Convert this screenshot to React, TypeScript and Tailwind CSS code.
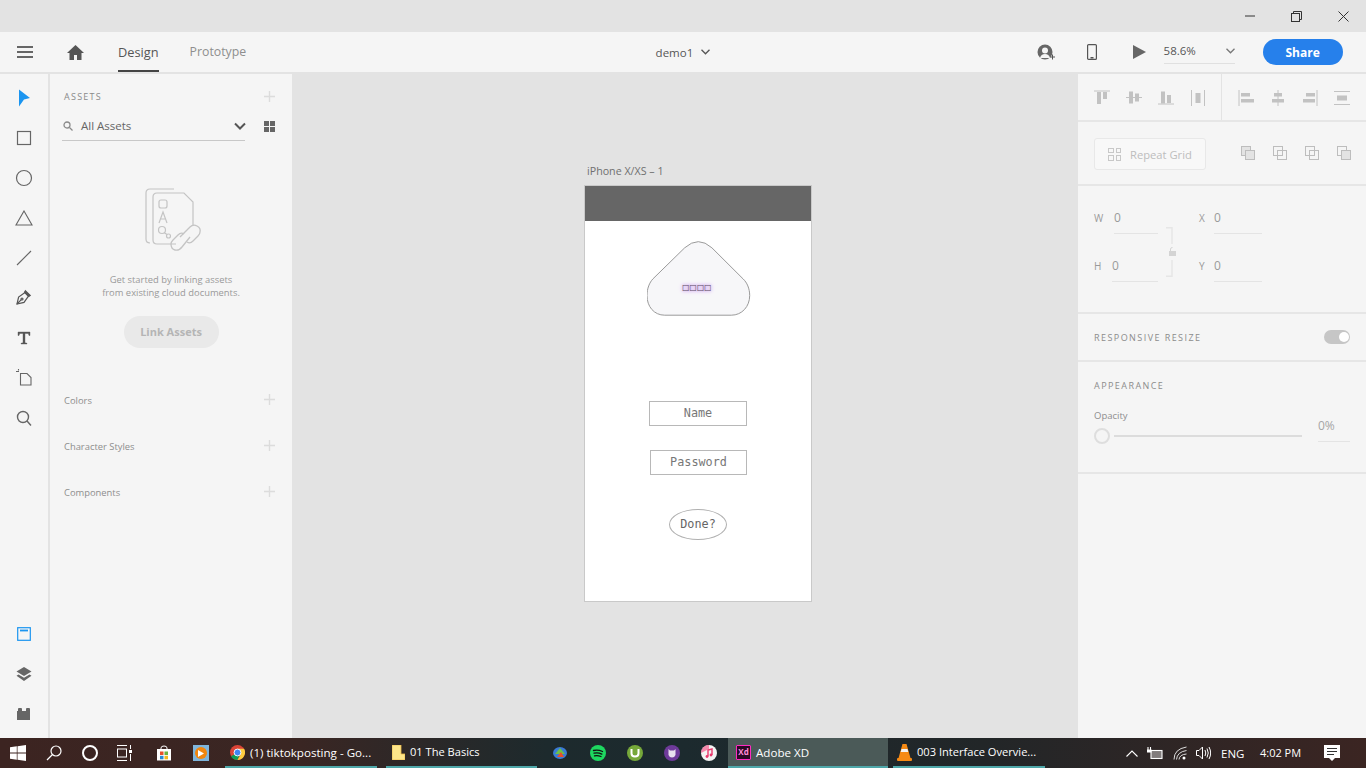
import { ReactNode } from "react";

const sans = { fontFamily: '"Open Sans", "Noto Sans", sans-serif' };
const mono = { fontFamily: '"DejaVu Sans Mono", monospace' };

function Plus({ className = "" }: { className?: string }) {
    return (
        <svg width="11" height="11" viewBox="0 0 11 11" className={className}>
            <path d="M5.5 0v11M0 5.5h11" stroke="#dcdcdc" strokeWidth="1.4" />
        </svg>
    );
}

function RailIcon({ children }: { children: ReactNode }) {
    return <div className="h-10 w-full flex items-center justify-center">{children}</div>;
}

function ToolRail() {
    return (
        <div className="w-[48px] shrink-0 flex flex-col justify-between pt-[4px] pb-[4px]">
            <div>
                <RailIcon>
                    <svg width="14" height="18" viewBox="0 0 14 18"><path d="M2 .5l11 8.500-6 1.500L2 17.500z" fill="#1b95f0" /></svg>
                </RailIcon>
                <RailIcon>
                    <svg width="16" height="16" viewBox="0 0 16 16"><rect x="1.5" y="1.5" width="13" height="13" fill="none" stroke="#666" strokeWidth="1.2" /></svg>
                </RailIcon>
                <RailIcon>
                    <svg width="18" height="18" viewBox="0 0 18 18"><circle cx="9" cy="9" r="7.5" fill="none" stroke="#666" strokeWidth="1.2" /></svg>
                </RailIcon>
                <RailIcon>
                    <svg width="18" height="16" viewBox="0 0 18 16"><path d="M9 1l8 14H1z" fill="none" stroke="#666" strokeWidth="1.1" /></svg>
                </RailIcon>
                <RailIcon>
                    <svg width="16" height="16" viewBox="0 0 16 16"><path d="M1 15L15 1" stroke="#666" strokeWidth="1.1" /></svg>
                </RailIcon>
                <RailIcon>
                    <svg width="16" height="16" viewBox="0 0 16 16" fill="none" stroke="#555" strokeWidth="1.2" className="-mt-[2px]">
                        <path d="M1 15l1.600-7L9 3.500l3.500 3.500L8 13.400z" />
                        <path d="M9.500 1.800l4.700 4.700-1.500 1L8.500 3.200z" fill="#555" />
                        <path d="M1 15l4.300-4.300" />
                        <circle cx="6" cy="10" r="1" />
                    </svg>
                </RailIcon>
                <RailIcon>
                    <svg width="14" height="14" viewBox="0 0 14 14"><path d="M1 1h12v3.500h-1L11.300 2.500H8v9.300l2 .5V13H4v-.7l2-.5V2.500H2.700L2 4.500H1z" fill="#555" stroke="#555" strokeWidth=".4" /></svg>
                </RailIcon>
                <RailIcon>
                    <svg width="17" height="17" viewBox="0 0 17 17" fill="none" stroke="#666" strokeWidth="1.1" className="-mt-[2px]">
                        <path d="M4.500 4.500H11l4 4v7.500H4.500z" />
                        <path d="M0 2.500h3M2.500 0v1.500" />
                    </svg>
                </RailIcon>
                <RailIcon>
                    <svg width="16" height="16" viewBox="0 0 16 16" fill="none" stroke="#666" strokeWidth="1.4">
                        <circle cx="7" cy="7" r="5.500" />
                        <path d="M11 11l4 4.500" />
                    </svg>
                </RailIcon>
            </div>
            <div>
                <RailIcon>
                    <svg width="14" height="14" viewBox="0 0 14 14"><rect x=".7" y=".7" width="12.600" height="12.600" fill="none" stroke="#1b95f0" strokeWidth="1.200" /><path d="M3 3.500h8" stroke="#1b95f0" strokeWidth="1.800" /></svg>
                </RailIcon>
                <RailIcon>
                    <svg width="16" height="15" viewBox="0 0 16 15" fill="#666"><path d="M8 0l7.500 4.500L8 9 .5 4.500z" /><path d="M2.500 7.500L8 10.800l5.500-3.300 2 1.200L8 14 .5 8.700z" /></svg>
                </RailIcon>
                <RailIcon>
                    <svg width="14" height="12" viewBox="0 0 14 12" fill="#666"><path d="M0 3h1V1q0-1 1-1h2q1 0 1 1v2h4V1q0-1 1-1h2q1 0 1 1v2h0v9H0z" /></svg>
                </RailIcon>
            </div>
        </div>
    );
}

function AssetRow({ label, className }: { label: string; className: string }) {
    return (
        <div className={`flex items-center justify-between pl-[14px] pr-[17px] ${className}`}>
            <span className="text-[9.400px] text-[#8e8e8e]">{label}</span>
            <Plus className="-mt-[3px]" />
        </div>
    );
}

function AssetsPanel() {
    return (
        <div className="w-[242px] shrink-0 bg-[#f5f5f5] flex flex-col">
            <div className="flex items-center justify-between pl-[14px] pr-[17px] mt-[16px] h-[12px]">
                <span className="text-[9px] tracking-[0.14em] pt-[1px] text-[#8a8a8a]">ASSETS</span>
                <Plus />
            </div>
            <div className="flex items-center mt-[12px] ml-[12px]">
                <div className="w-[183px] h-[27px] border-b border-[#c8c8c8] flex items-center pb-[2px]">
                    <svg width="10" height="10" viewBox="0 0 10 10" fill="none" stroke="#8a8a8a" strokeWidth="1.300" className="ml-[1px]">
                        <circle cx="4" cy="4" r="3" /><path d="M6.500 6.500L9.500 9.500" />
                    </svg>
                    <span className="ml-[8px] text-[11.500px] text-[#666]">All Assets</span>
                    <svg width="12" height="8" viewBox="0 0 12 8" fill="none" stroke="#555" strokeWidth="2" className="ml-auto mr-[-1px]">
                        <path d="M1 1.500l5 5 5-5" />
                    </svg>
                </div>
                <div className="ml-[19px] -mt-[3px] grid grid-cols-2 gap-[1px] w-[11px] h-[11px]">
                    <div className="bg-[#666]" /><div className="bg-[#666]" /><div className="bg-[#666]" /><div className="bg-[#666]" />
                </div>
            </div>
            <div className="flex flex-col items-center">
                <svg width="58" height="66" viewBox="0 0 58 66" fill="none" stroke="#c4c4c4" strokeWidth="1.200" className="mt-[46px] ml-[3px]">
                    <path d="M6 56q-4 0-4-4V6q0-4 4-4h24" />
                    <path d="M32 57H13q-4 0-4-4V10q0-4 4-4h27l9 9v24" />
                    <rect x="15" y="13" width="8" height="8" rx="2" />
                    <path d="M15 36l4-11 4 11M16.500 32h5" />
                    <circle cx="18" cy="43" r="3.500" />
                    <circle cx="24.500" cy="49" r="2" />
                    <path d="M20 45.500l3 2" />
                    <path d="M36 50l10-10q3-3 7-1t3 6q0 2-2 4l-5 5q-3 3-6 1" strokeWidth="1.300" />
                    <path d="M46 50l-8 10q-3 4-7 3t-4-6q0-2 2-4l5-5q3-3 6-1" strokeWidth="1.300" />
                </svg>
                <div className="mt-[20px] text-[9.400px] leading-[13px] text-[#9a9a9a] text-center">
                    <div>Get started by linking assets</div>
                    <div>from existing cloud documents.</div>
                </div>
                <div className="mt-[17px] w-[95px] h-[32px] rounded-full bg-[#e9e9e9] flex items-center justify-center text-[11px] font-bold text-[#b5b5b5]">
                    Link Assets
                </div>
            </div>
            <AssetRow label="Colors" className="mt-[46px]" />
            <AssetRow label="Character Styles" className="mt-[32px]" />
            <AssetRow label="Components" className="mt-[32px]" />
        </div>
    );
}

function Canvas() {
    return (
        <div className="relative flex-1 bg-[#e3e3e3]">
            <div className="absolute left-[295px] top-[90px] text-[10.700px] leading-[14px] text-[#707070] whitespace-nowrap">iPhone X/XS – 1</div>
            <div className="absolute left-[292px] top-[111px] w-[228px] h-[417px] bg-white border border-[#c9c9c9] flex flex-col">
                <div className="h-[35px] bg-[#666] shrink-0" />
                <div className="relative ml-[62px] mt-[20px] w-[103px] h-[74px]">
                    <svg width="104" height="75" viewBox="0 -0.500 104 75" className="block">
                        <path d="M37.700 6.300Q51.300-6 64.900 6.300L96 37.300C100 41 102.700 47 102.700 54 102.700 65 95 73.700 84.300 73.700H17.700C7 73.700 0 65 0 54 0 47 2.500 41 6 37.300Z" fill="#f7f7f9" stroke="#9a9a9a" strokeWidth="1" />
                    </svg>
                    <div className="absolute left-[35px] top-[40px] text-[7.800px] leading-[14px] text-[#5a4a60] [text-shadow:0_0_3px_#b060e8,0_0_5px_#c080f0]" style={{ fontFamily: '"DejaVu Sans", sans-serif' }}>□□□□</div>
                </div>
                <div className="ml-[64px] mt-[86px] w-[98px] h-[25px] border border-[#b8b8b8] flex items-center justify-center pt-[1px] text-[11.800px] text-[#777]" style={mono}>Name</div>
                <div className="ml-[65px] mt-[24px] w-[97px] h-[25px] border border-[#b8b8b8] flex items-center justify-center pt-[1px] text-[11.800px] text-[#777]" style={mono}>Password</div>
                <div className="ml-[84px] mt-[34px] w-[58px] h-[31px] border border-[#b0b0b0] rounded-[50%] flex items-center justify-center pt-[1px] text-[11.800px] text-[#666]" style={mono}>Done?</div>
            </div>
        </div>
    );
}

const alignIcons = [
    <><path d="M0 1h16" /><rect x="3" y="2" width="4" height="12" stroke="none" /><rect x="9" y="2" width="4" height="7" stroke="none" /></>,
    <><path d="M0 7.500h16" /><rect x="3" y="1.500" width="4" height="12" stroke="none" /><rect x="9" y="3.500" width="4" height="8" stroke="none" /></>,
    <><path d="M0 14h16" /><rect x="3" y="1.500" width="4" height="12" stroke="none" /><rect x="9" y="5" width="4" height="8" stroke="none" /></>,
    <><path d="M1.500 0v16M14.500 0v16" /><rect x="5.500" y="3" width="5" height="10" stroke="none" /></>,
];
const alignIcons2 = [
    <><path d="M1 0v16" /><rect x="3" y="3" width="9" height="3.500" stroke="none" /><rect x="3" y="9" width="13" height="3.500" stroke="none" /></>,
    <><path d="M8 0v16" /><rect x="4" y="3" width="8" height="3.500" stroke="none" /><rect x="2" y="9" width="12" height="3.500" stroke="none" /></>,
    <><path d="M15 0v16" /><rect x="4" y="3" width="9" height="3.500" stroke="none" /><rect x="1" y="9" width="12" height="3.500" stroke="none" /></>,
    <><path d="M0 1.500h16M0 14.500h16" /><rect x="3" y="5.500" width="10" height="5" stroke="none" /></>,
];

function AlignIcon({ children }: { children: ReactNode }) {
    return <svg width="16" height="16" viewBox="0 0 16 16" fill="#c2c2c2" stroke="#c2c2c2" strokeWidth="1">{children}</svg>;
}

function Field({ label, labelWidth, className, pad }: { label: string; labelWidth: string; className: string; pad: string }) {
    return (
        <div className={`flex items-start ${className}`}>
            <span className={`text-[10px] mt-[4px] leading-[12px] text-[#9a9a9a] ${labelWidth}`}>{label}</span>
            <div className={`h-[26px] border-b border-[#e4e4e4] text-[12px] leading-[16px] pt-[2px] text-[#9a9a9a] ${pad}`}>0</div>
        </div>
    );
}

function RightPanel() {
    return (
        <div className="w-[288px] shrink-0 bg-[#f5f5f5] flex flex-col">
            <div className="h-[48px] shrink-0 border-b-2 border-[#e6e6e6] flex">
                <div className="w-[144px] border-r border-[#e3e3e3] flex items-center gap-[16px] pl-[16px] pt-[2px]">
                    {alignIcons.map((icon, i) => <AlignIcon key={i}>{icon}</AlignIcon>)}
                </div>
                <div className="flex items-center gap-[16px] pl-[16px] pt-[2px]">
                    {alignIcons2.map((icon, i) => <AlignIcon key={i}>{icon}</AlignIcon>)}
                </div>
            </div>
            <div className="h-[64px] shrink-0 border-b-2 border-[#e6e6e6] flex items-center pl-[16px] pt-[2px]">
                <div className="w-[112px] h-[32px] border border-[#e8e8e8] rounded-[3px] bg-[#f8f8f8] flex items-center pl-[13px]">
                    <div className="grid grid-cols-2 gap-[2px]">
                        <div className="w-[5.500px] h-[5.500px] border border-[#c8c8c8]" /><div className="w-[5.500px] h-[5.500px] border border-[#c8c8c8]" />
                        <div className="w-[5.500px] h-[5.500px] border border-[#c8c8c8]" /><div className="w-[5.500px] h-[5.500px] border border-[#c8c8c8]" />
                    </div>
                    <span className="ml-[9px] text-[11.200px] pt-[2px] text-[#bdbdbd] whitespace-nowrap">Repeat Grid</span>
                </div>
                <div className="flex gap-[18px] ml-[35px] -mt-[2px]">
                    {[0, 1, 2, 3].map((i) => (
                        <svg key={i} width="14" height="14" viewBox="0 0 14 14" stroke="#bdbdbd" strokeWidth="1" fill="none">
                            <rect x=".5" y=".5" width="9" height="9" fill={i === 0 ? "#e3e3e3" : "none"} />
                            <rect x="4.500" y="4.500" width="9" height="9" fill={i === 0 || i === 3 ? "#e3e3e3" : "none"} />
                        </svg>
                    ))}
                </div>
            </div>
            <div className="relative h-[128px] shrink-0 border-b-2 border-[#e6e6e6] pl-[16px] pt-[22px]">
                <div className="flex">
                    <Field label="W" labelWidth="w-[20px]" className="w-[105px]" pad="w-[44px]" />
                    <Field label="X" labelWidth="w-[15px]" className="" pad="w-[48px]" />
                </div>
                <div className="flex mt-[22px]">
                    <Field label="H" labelWidth="w-[18px]" className="w-[105px]" pad="w-[46px]" />
                    <Field label="Y" labelWidth="w-[15px]" className="" pad="w-[48px]" />
                </div>
                <svg width="10" height="50" viewBox="0 0 10 50" fill="none" stroke="#e6e6e6" strokeWidth="1.500" className="absolute left-[88px] top-[41px]">
                    <path d="M0 .8h6v16.200M0 49.200h6V33" />
                    <rect x="3" y="24" width="7" height="5" fill="#d4d4d4" stroke="none" />
                    <path d="M4.500 24v-2q0-1.500 2-1.500" stroke="#d4d4d4" strokeWidth="1" />
                </svg>
            </div>
            <div className="h-[48px] shrink-0 border-b-2 border-[#e6e6e6] flex items-center justify-between pl-[16px] pr-[16px] pt-[1px]">
                <span className="text-[9px] tracking-[0.16em] text-[#8c8c8c]">RESPONSIVE RESIZE</span>
                <div className="w-[26px] h-[14px] rounded-full bg-[#c6c6c6] flex items-center justify-end pr-[1.500px] -mt-[1px]">
                    <div className="w-[10px] h-[10px] rounded-full bg-white" />
                </div>
            </div>
            <div className="h-[112px] shrink-0 border-b-2 border-[#e6e6e6] pl-[16px] pr-[16px]">
                <div className="mt-[18px] text-[9px] leading-[12px] tracking-[0.16em] text-[#8c8c8c]">APPEARANCE</div>
                <div className="flex justify-between items-start mt-[17px]">
                    <div>
                        <div className="text-[9.500px] leading-[13px] text-[#8e8e8e]">Opacity</div>
                        <div className="flex items-center mt-[6px]">
                            <div className="w-[16px] h-[16px] rounded-full border-2 border-[#dedede] bg-[#f5f5f5]" />
                            <div className="ml-[4px] w-[188px] h-[2px] bg-[#dcdcdc]" />
                        </div>
                    </div>
                    <div className="w-[32px] h-[24px] border-b border-[#e4e4e4] text-[12px] leading-[16px] text-[#a5a5a5] mt-[9px]">0%</div>
                </div>
            </div>
        </div>
    );
}

function TaskItem({ width, active, children, className = "" }: { width: string; active?: boolean; children: ReactNode; className?: string }) {
    return (
        <div className={`h-full flex items-center border-b-2 border-[#4ea7a9] ${width} ${active ? "bg-[#4b5a58]" : ""} ${className}`}>
            {children}
        </div>
    );
}

function Taskbar() {
    return (
        <div className="h-[30px] shrink-0 flex items-center text-white bg-[linear-gradient(90deg,#3c2421_0%,#3a2623_22%,#1d2a2d_40%,#1c2a2e_50%,#222628_72%,#3b2522_100%)]" style={sans}>
            <svg width="16" height="16" viewBox="0 0 16 16" fill="#fff" className="ml-[10px] shrink-0">
                <path d="M0 2.300l6.800-1v6.300H0zM7.500 1.200L16 0v7.600H7.500zM0 8.400h6.800v6.300l-6.800-1zM7.500 8.400H16V16l-8.500-1.200z" />
            </svg>
            <svg width="16" height="16" viewBox="0 0 16 16" fill="none" stroke="#fff" strokeWidth="1.200" className="ml-[20px] shrink-0">
                <circle cx="10" cy="6" r="5" /><path d="M6.500 9.500L1 15" />
            </svg>
            <div className="ml-[20px] w-[16px] h-[16px] rounded-full border-2 border-white shrink-0" />
            <svg width="16" height="16" viewBox="0 0 16 16" fill="none" stroke="#fff" strokeWidth="1" className="ml-[18px] shrink-0">
                <path d="M1 .5h10M1 15.500h10" /><rect x="1.500" y="4" width="9" height="8" /><path d="M14.500 0v4M14.500 9v7" /><rect x="13" y="5" width="3" height="3" fill="#fff" stroke="none" />
            </svg>
            <svg width="16" height="16" viewBox="0 0 16 16" className="ml-[24px] shrink-0">
                <path d="M1 4h14v11.500H1z" fill="#fff" /><path d="M5 4.500V3q0-2 3-2t3 2v1.500" fill="none" stroke="#fff" />
                <rect x="4" y="6.500" width="3.500" height="3.500" fill="#e8502a" /><rect x="8.500" y="6.500" width="3.500" height="3.500" fill="#6cb33f" />
                <rect x="4" y="10.800" width="3.500" height="3.500" fill="#2a8ad4" /><rect x="8.500" y="10.800" width="3.500" height="3.500" fill="#f5b81f" />
            </svg>
            <div className="ml-[21px] w-[16px] h-[16px] bg-[#7fb5dc] flex items-center justify-center shrink-0">
                <div className="w-[12px] h-[12px] rounded-full bg-[#f2860e] flex items-center justify-center">
                    <svg width="6" height="7" viewBox="0 0 6 7"><path d="M0 0l6 3.500L0 7z" fill="#fff" /></svg>
                </div>
            </div>
            <TaskItem width="w-[152px]" className="ml-[16px] shrink-0">
                <svg width="15" height="15" viewBox="0 0 24 24" className="ml-[5px] shrink-0">
                    <circle cx="12" cy="12" r="12" fill="#db4437" />
                    <path d="M12 12L1.600 18A12 12 0 0 0 12 24l5-12z" fill="#0f9d58" />
                    <path d="M12 6h10.400A12 12 0 0 1 12 24l5.200-9z" fill="#ffcd40" />
                    <circle cx="12" cy="12" r="5.500" fill="#4285f4" stroke="#fff" strokeWidth="1.500" />
                </svg>
                <span className="ml-[5px] text-[11.600px] pt-[1px] whitespace-nowrap">(1) tiktokposting - Go...</span>
            </TaskItem>
            <TaskItem width="w-[151px]" className="ml-[9px] shrink-0">
                <svg width="13" height="15" viewBox="0 0 13 15" className="ml-[6px] shrink-0">
                    <path d="M0 0h9v9h4v6H0z" fill="#fde68a" stroke="#eab94a" strokeWidth=".8" />
                </svg>
                <span className="ml-[5px] text-[11.100px] pt-[1px] whitespace-nowrap">01 The Basics</span>
            </TaskItem>
            {[
                <svg key="a" width="16" height="16" viewBox="0 0 16 16"><ellipse cx="8" cy="8" rx="7" ry="6" fill="#3a7bd5" /><path d="M3 9l5-6 5 6z" fill="#6cc04a" /><path d="M5 12l4-5 3 5z" fill="#e8502a" /></svg>,
                <svg key="b" width="16" height="16" viewBox="0 0 16 16" fill="none"><circle cx="8" cy="8" r="8" fill="#1ed760" /><path d="M3.500 5.500q4.500-1.200 9 1M4 8.200q4-1 7.800.9M4.500 10.800q3.300-.7 6.500.7" stroke="#111" strokeWidth="1.300" strokeLinecap="round" /></svg>,
                <svg key="c" width="16" height="16" viewBox="0 0 16 16"><circle cx="8" cy="8" r="8" fill="#76a83a" /><path d="M4.500 4v4.500q0 3 3.500 3t3.500-3V4" fill="none" stroke="#fff" strokeWidth="2" /></svg>,
                <svg key="d" width="16" height="16" viewBox="0 0 16 16"><circle cx="8" cy="8" r="8" fill="#6e3a9a" /><path d="M4.500 4l1.500 1.500h4L11.500 4v6q-1 2.500-3.500 2.500T4.500 10z" fill="#e8e0ee" /></svg>,
                <svg key="e" width="16" height="16" viewBox="0 0 16 16"><circle cx="8" cy="8" r="8" fill="#f3f3f3" /><path d="M0 8a8 8 0 0 1 8-8v4z" fill="#f25a8c" opacity=".7" /><path d="M7 11.500V5l4-1v6" fill="none" stroke="#e8386c" strokeWidth="1.400" /><circle cx="6" cy="11.500" r="1.400" fill="#e8386c" /><circle cx="10" cy="10" r="1.400" fill="#e8386c" /></svg>,
            ].map((icon, i) => (
                <div key={i} className={`shrink-0 ${i === 0 ? "ml-[15px]" : i === 1 ? "ml-[22px]" : "ml-[21px]"}`}>{icon}</div>
            ))}
            <TaskItem width="w-[160px]" active className="ml-[11px] shrink-0">
                <div className="ml-[8px] w-[15px] h-[15px] bg-[#2b0a25] border border-[#ff2bc2] rounded-[1px] flex items-center justify-center text-[8px] font-bold text-[#ff8ad8] leading-none shrink-0">Xd</div>
                <span className="ml-[5px] text-[11.600px] pt-[1px] whitespace-nowrap">Adobe XD</span>
            </TaskItem>
            <TaskItem width="w-[152px]" className="ml-[5px] shrink-0">
                <svg width="15" height="17" viewBox="0 0 15 17" className="ml-[4px] shrink-0">
                    <path d="M5.500 0h4l4 14h-12z" fill="#f68a14" /><path d="M4.500 5h6l.8 3h-7.600z" fill="#f3f3f3" /><rect x="0" y="14" width="15" height="3" rx="1" fill="#f68a14" />
                </svg>
                <span className="ml-[5px] text-[11.100px] pt-[1px] whitespace-nowrap">003 Interface Overvie...</span>
            </TaskItem>
            <svg width="12" height="7" viewBox="0 0 12 7" fill="none" stroke="#fff" strokeWidth="1.100" className="ml-[81px] shrink-0"><path d="M.500 6.500L6 1l5.500 5.500" /></svg>
            <svg width="16" height="13" viewBox="0 0 16 13" fill="none" stroke="#fff" strokeWidth="1.100" className="ml-[9px] shrink-0">
                <rect x="4" y="3.500" width="11" height="8" fill="#fff" fillOpacity=".4" /><path d="M1 0v3M3.500 0v3" /><rect x="0" y="2.500" width="4.500" height="3" fill="#fff" stroke="none" />
            </svg>
            <svg width="14" height="14" viewBox="0 0 14 14" fill="none" stroke="#ddd" strokeWidth="1" className="ml-[10px] shrink-0">
                <path d="M1 13.500Q1 3 13.500 1M3.500 13.500Q4 6 13.500 4.500M6 13.500Q6.500 8.500 13.500 8" /><circle cx="11" cy="12" r="1.500" fill="#fff" stroke="none" />
            </svg>
            <svg width="15" height="14" viewBox="0 0 15 14" fill="none" stroke="#fff" strokeWidth="1" className="ml-[9px] shrink-0">
                <path d="M.500 4.500H3L6.500 1v12L3 9.500H.500z" /><path d="M9 4q1.500 3 0 6M11 2.500q2.500 4.500 0 9M13 1q3.300 6 0 12" />
            </svg>
            <span className="ml-[10px] text-[11.500px] pt-[1px] w-[24px] shrink-0">ENG</span>
            <span className="ml-[15px] text-[11px] pt-[1px] w-[42px] whitespace-nowrap shrink-0">4:02 PM</span>
            <svg width="16" height="17" viewBox="0 0 16 17" className="ml-[22px] shrink-0">
                <path d="M0 0h16v13h-5l-3 3-3-3H0z" fill="#fff" /><path d="M3 3.500h10M3 6.500h10M3 9.500h7" stroke="#333" strokeWidth="1" />
            </svg>
        </div>
    );
}

export default function App() {
    return (
        <div className="w-[1366px] h-[768px] flex flex-col overflow-hidden bg-[#e3e3e3]" style={sans}>
            {/* window title bar */}
            <div className="h-[32px] shrink-0 bg-[#e3e3e3] flex items-center justify-end">
                <svg width="10" height="2" viewBox="0 0 10 2" className="mr-[36px]"><path d="M0 1h10" stroke="#333" /></svg>
                <svg width="11" height="11" viewBox="0 0 11 11" fill="none" stroke="#333" className="mr-[36px]">
                    <rect x=".5" y="2.500" width="8" height="8" /><path d="M2.500 2.500V.5h8v8h-2" />
                </svg>
                <svg width="11" height="11" viewBox="0 0 11 11" stroke="#333" className="mr-[17px]"><path d="M.500.500l10 10M10.500.500l-10 10" /></svg>
            </div>
            {/* app header */}
            <div className="h-[42px] shrink-0 bg-[#f5f5f5] border-b-2 border-[#e3e3e3] flex items-center">
                <svg width="16" height="12" viewBox="0 0 16 12" fill="#666" className="ml-[17px]">
                    <rect y="0" width="16" height="2" /><rect y="5" width="16" height="2" /><rect y="10" width="16" height="2" />
                </svg>
                <svg width="17" height="15" viewBox="0 0 17 15" fill="#555" className="ml-[34px]">
                    <path d="M8.500 0L17 8h-2.500v7H10v-5H7v5H2.500V8H0z" />
                </svg>
                <div className="ml-[34px] h-full relative flex items-center pt-[1px] text-[12.800px] text-[#555]">
                    Design
                    <div className="absolute left-0 right-0 bottom-0 h-[2px] bg-[#444]" />
                </div>
                <div className="ml-[31px] pt-[1px] w-[56px] text-[12.300px] whitespace-nowrap text-[#8e8e8e]">Prototype</div>
                <div className="ml-[410px] pt-[1px] w-[37px] text-[11.500px] text-[#555]">demo1</div>
                <svg width="9" height="6" viewBox="0 0 9 6" fill="none" stroke="#555" strokeWidth="1.300" className="ml-[8px]"><path d="M.5.8l4 4 4-4" /></svg>
                <svg width="18" height="16" viewBox="0 0 18 16" className="ml-[327px]">
                    <circle cx="8" cy="8" r="7.500" fill="#666" /><circle cx="8" cy="6.500" r="3" fill="#f5f5f5" /><path d="M3 14q1-4 5-4t5 4z" fill="#f5f5f5" /><path d="M13 13h5M15.500 10.500v5" stroke="#555" strokeWidth="1" />
                </svg>
                <svg width="10" height="16" viewBox="0 0 10 16" className="ml-[32px]">
                    <rect x=".6" y=".6" width="8.800" height="14.800" rx="1" fill="none" stroke="#555" strokeWidth="1.200" /><rect x="3.500" y="13" width="3" height="1.500" fill="#555" />
                </svg>
                <svg width="13" height="14" viewBox="0 0 13 14" fill="#666" className="ml-[36px]"><path d="M0 0l13 7-13 7z" /></svg>
                <div className="ml-[18px] w-[71px] h-[24px] border-b border-[#e0e0e0] flex items-center justify-between -mt-[1px]">
                    <span className="text-[11.500px] text-[#555]">58.6%</span>
                    <svg width="9" height="6" viewBox="0 0 9 6" fill="none" stroke="#777" strokeWidth="1.300"><path d="M.5.800l4 4 4-4" /></svg>
                </div>
                <div className="ml-[28px] w-[80px] h-[26px] rounded-full bg-[#2680eb] flex items-center justify-center pt-[1px] text-[12px] font-bold text-white">Share</div>
            </div>
            <div className="flex-1 flex min-h-0">
                <div className="flex bg-[#f5f5f5]">
                    <ToolRail />
                    <div className="w-[2px] bg-[#e3e3e3]" />
                    <AssetsPanel />
                </div>
                <Canvas />
                <RightPanel />
            </div>
            <Taskbar />
        </div>
    );
}
